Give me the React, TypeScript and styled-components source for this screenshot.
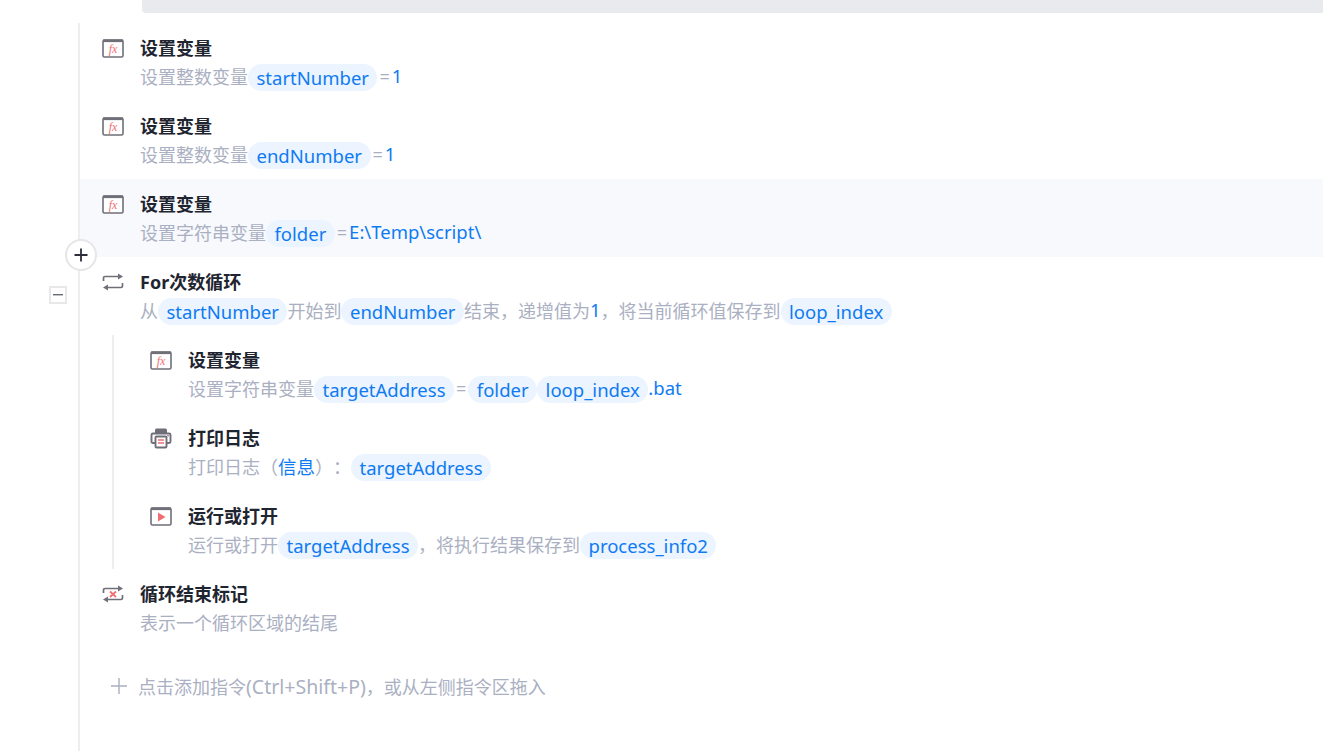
import React from 'react';
import styled, { createGlobalStyle } from 'styled-components';

const GlobalStyle = createGlobalStyle`
  html, body {
    margin: 0;
    padding: 0;
    height: 100%;
    background: #fff;
    overflow: hidden;
    font-family: "Noto Sans", "Noto Sans CJK SC", sans-serif;
  }
`;

type IconKind = 'fx' | 'loop' | 'print' | 'play' | 'loopEnd';

function StepIcon({ kind }: { kind: IconKind }): JSX.Element {
  const grey = '#6f6f78';
  const red = '#f26d72';
  if (kind === 'fx') {
    return (
      <svg width="22" height="20" viewBox="0 0 22 20" fill="none">
        <rect x="1" y="2" width="20" height="17" rx="1.5" fill="#fff" stroke={grey} strokeWidth="1.6" />
        <rect x="1" y="1.5" width="20" height="2.6" fill={grey} />
        <text x="11" y="15" textAnchor="middle" fontFamily="Liberation Serif, serif" fontStyle="italic" fontSize="12" fill={red}>
          fx
        </text>
      </svg>
    );
  }
  if (kind === 'play') {
    return (
      <svg width="22" height="20" viewBox="0 0 22 20" fill="none">
        <rect x="1" y="2" width="20" height="17" rx="1.5" fill="#fff" stroke={grey} strokeWidth="1.6" />
        <rect x="1" y="1.5" width="20" height="2.6" fill={grey} />
        <path d="M8 6.5 L15.5 11 L8 15.5 Z" fill={red} />
      </svg>
    );
  }
  if (kind === 'print') {
    return (
      <svg width="22" height="22" viewBox="0 0 22 22" fill="none">
        <path d="M5 6 V3 Q5 1.5 6.5 1.5 H15.5 Q17 1.5 17 3 V6 Z" fill={grey} />
        <path d="M5 16 H3 Q1.5 16 1.5 14.5 V8 Q1.5 6.5 3 6.5 H19 Q20.5 6.5 20.5 8 V14.5 Q20.5 16 19 16 H17" stroke={grey} strokeWidth="1.9" />
        <rect x="5.5" y="9.5" width="11" height="11" rx="1" fill="#fff" stroke={grey} strokeWidth="1.9" />
        <path d="M8 13 H14 M8 16 H14" stroke={red} strokeWidth="1.6" />
        <path d="M17 8.8 H19" stroke={grey} strokeWidth="1" />
      </svg>
    );
  }
  return (
    <svg width="22" height="18" viewBox="0 0 22 18" fill="none">
      <path d="M1.5 8 V5 Q1.5 3.5 3 3.5 H18" stroke={grey} strokeWidth="1.7" />
      <path d="M16 0.5 L21 3.5 L16 6.5 Z" fill={grey} />
      <path d="M20.5 10 V13 Q20.5 14.5 19 14.5 H4" stroke={grey} strokeWidth="1.7" />
      <path d="M6 11.5 L1 14.5 L6 17.5 Z" fill={grey} />
      {kind === 'loopEnd' && <path d="M8 6.5 L14 12 M14 6.5 L8 12" stroke={red} strokeWidth="1.8" />}
    </svg>
  );
}

const Page = styled.div`
  height: 751px;
  display: flex;
  flex-direction: column;
  overflow: hidden;
`;

const TopBar = styled.div`
  height: 13px;
  margin-left: 142px;
  flex: none;
  background: #e9eaee;
  border-bottom-left-radius: 4px;
`;

const Flow = styled.div`
  flex: 1;
  margin: 10px 0 0 78px;
  border-left: 2px solid #eeeef1;
`;

const Row = styled.div<{ $active?: boolean; $nested?: boolean }>`
  position: relative;
  height: 78px;
  box-sizing: border-box;
  padding: 13px 0 0 ${({ $nested }) => ($nested ? 36 : 22)}px;
  display: flex;
  gap: 16px;
  background: ${({ $active }) => ($active ? '#f7f9fd' : 'transparent')};
`;

const IconSlot = styled.div`
  width: 22px;
  height: 24px;
  flex: none;
  display: flex;
  align-items: center;
  justify-content: center;
`;

const Body = styled.div`
  display: flex;
  flex-direction: column;
`;

const Title = styled.div`
  font-size: 18px;
  line-height: 24px;
  font-weight: 700;
  color: #1f2530;
`;

const Detail = styled.div`
  display: flex;
  align-items: center;
  height: 29px;
  margin-top: 2px;
  font-size: 18px;
  color: #aab0c2;
  white-space: nowrap;
  text-spacing-trim: space-all;
`;

const Plain = styled.span`
  margin-top: -2px;
`;

const Equals = styled.span`
  margin: -2px 2px 0;
`;

const Chip = styled.span`
  display: inline-flex;
  align-items: center;
  height: 27px;
  padding: 0 8.5px;
  margin-top: 2px;
  border-radius: 14px;
  background: #ebf4ff;
  color: #0f7bf2;
  font-size: 18.5px;
`;

const Value = styled.span`
  color: #0f7bf2;
  margin-top: -2px;
  font-size: 18.5px;
`;

const Nested = styled.div`
  margin-left: 32px;
  border-left: 2px solid #eeeef1;
`;

const InsertButton = styled.div`
  position: absolute;
  left: -15px;
  bottom: -14px;
  width: 28px;
  height: 28px;
  border: 2px solid #e6e6e8;
  border-radius: 50%;
  background: #fff;
  display: flex;
  align-items: center;
  justify-content: center;
  z-index: 1;
`;

const CollapseBox = styled.div`
  position: absolute;
  left: -31px;
  top: 29px;
  width: 14px;
  height: 14px;
  border: 2px solid #e8e8ea;
  background: #fff;
  display: flex;
  align-items: center;
  justify-content: center;
`;

const AddHint = styled.div`
  display: flex;
  align-items: center;
  gap: 11px;
  margin: 26px 0 0 31px;
  height: 26px;
  font-size: 18px;
  color: #aab0c2;
  white-space: nowrap;
`;

const HintLatin = styled.span`
  font-size: 19.5px;
`;

type Part = { chip?: string; value?: string; text?: string; equals?: boolean };

const chip = (s: string): Part => ({ chip: s });
const value = (s: string): Part => ({ value: s });
const text = (s: string): Part => ({ text: s });
const equals: Part = { equals: true };

interface Step {
  icon: IconKind;
  title: string;
  parts: Part[];
  active?: boolean;
  collapsible?: boolean;
}

const before: Step[] = [
  { icon: 'fx', title: '设置变量', parts: [text('设置整数变量'), chip('startNumber'), equals, value('1')] },
  { icon: 'fx', title: '设置变量', parts: [text('设置整数变量'), chip('endNumber'), equals, value('1')] },
  {
    icon: 'fx',
    title: '设置变量',
    active: true,
    parts: [text('设置字符串变量'), chip('folder'), equals, value('E:\\Temp\\script\\')],
  },
  {
    icon: 'loop',
    title: 'For次数循环',
    collapsible: true,
    parts: [
      text('从'),
      chip('startNumber'),
      text('开始到'),
      chip('endNumber'),
      text('结束，递增值为'),
      value('1'),
      text('，将当前循环值保存到'),
      chip('loop_index'),
    ],
  },
];

const inner: Step[] = [
  {
    icon: 'fx',
    title: '设置变量',
    parts: [text('设置字符串变量'), chip('targetAddress'), equals, chip('folder'), chip('loop_index'), value('.bat')],
  },
  {
    icon: 'print',
    title: '打印日志',
    parts: [text('打印日志（'), value('信息'), text('）：'), chip('targetAddress')],
  },
  {
    icon: 'play',
    title: '运行或打开',
    parts: [text('运行或打开'), chip('targetAddress'), text('，将执行结果保存到'), chip('process_info2')],
  },
];

function StepRow({ step, nested }: { step: Step; nested?: boolean }): JSX.Element {
  return (
    <Row $active={step.active} $nested={nested}>
      <IconSlot>
        <StepIcon kind={step.icon} />
      </IconSlot>
      <Body>
        <Title>{step.title}</Title>
        <Detail>
          {step.parts.map((p, i) => {
            if (p.chip) return <Chip key={i}>{p.chip}</Chip>;
            if (p.value) return <Value key={i}>{p.value}</Value>;
            if (p.equals) return <Equals key={i}>=</Equals>;
            return <Plain key={i}>{p.text}</Plain>;
          })}
        </Detail>
      </Body>
      {step.active && (
        <InsertButton>
          <svg width="14" height="14" viewBox="0 0 14 14">
            <path d="M7 0.5 V13.5 M0.5 7 H13.5" stroke="#2a2f3a" strokeWidth="1.8" />
          </svg>
        </InsertButton>
      )}
      {step.collapsible && (
        <CollapseBox>
          <svg width="10" height="2" viewBox="0 0 10 2">
            <rect width="10" height="1.4" fill="#666a72" />
          </svg>
        </CollapseBox>
      )}
    </Row>
  );
}

export default function App(): JSX.Element {
  return (
    <Page>
      <GlobalStyle />
      <TopBar />
      <Flow>
        {before.map((s, i) => (
          <StepRow key={i} step={s} />
        ))}
        <Nested>
          {inner.map((s, i) => (
            <StepRow key={i} step={s} nested />
          ))}
        </Nested>
        <StepRow step={{ icon: 'loopEnd', title: '循环结束标记', parts: [text('表示一个循环区域的结尾')] }} />
        <AddHint>
          <svg width="16" height="16" viewBox="0 0 16 16">
            <path d="M8 0 V16 M0 8 H16" stroke="#aab0c2" strokeWidth="1.4" />
          </svg>
          <span>
            点击添加指令<HintLatin>(Ctrl+Shift+P)</HintLatin>，或从左侧指令区拖入
          </span>
        </AddHint>
      </Flow>
    </Page>
  );
}
